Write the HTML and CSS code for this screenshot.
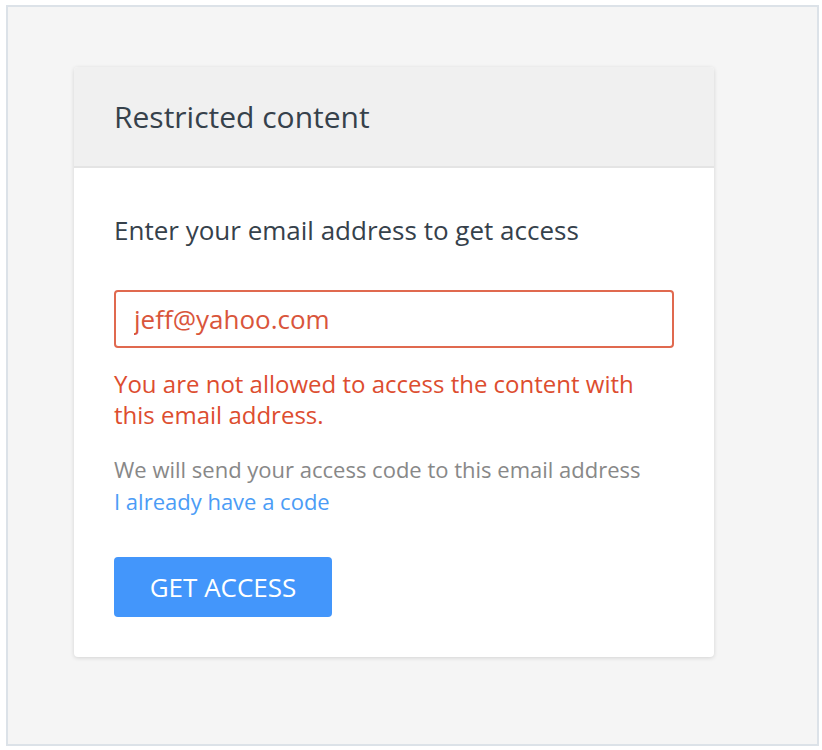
FILE: index.html
```html
<!DOCTYPE html>
<html lang="en">
  <head>
    <meta charset="UTF-8" />
    <meta name="viewport" content="width=device-width, initial-scale=1.0" />
    <title>Restricted content</title>
    <link rel="stylesheet" href="styles.css">
  </head>
  <body>
    <div class="frame">
      <div class="card">
        <header class="card-header">
          <h1>Restricted content</h1>
        </header>

        <form class="card-body" id="accessForm">
          <label for="email">Enter your email address to get access</label>
          <input type="email" id="email" name="email" class="has-error" value="jeff@yahoo.com" />
          <p class="error">You are not allowed to access the content with this email address.</p>
          <p class="hint">We will send your access code to this email address</p>
          <a class="code-link" href="#">I already have a code</a>
          <div class="actions">
            <button type="submit">GET ACCESS</button>
          </div>
        </form>
      </div>
    </div>
  </body>
</html>
```

FILE: styles.css
```css
body {
  font-family: "Open Sans", "Noto Sans", sans-serif;
  margin: 0;
  padding: 0;
}
.frame {
  margin: 5px 3px 4px 6px;
  height: 741px;
  box-sizing: border-box;
  border: 2px solid #dce2e8;
  background-color: #f5f5f5;
  padding: 60px 0 0 66px;
}
.card {
  width: 640px;
  background-color: #fff;
  border-radius: 4px;
  box-shadow: 0 1px 4px rgba(0, 0, 0, 0.14);
  overflow: hidden;
}
.card-header {
  background-color: #f0f0f0;
  border-bottom: 2px solid #e4e4e4;
  padding: 0 40px;
  height: 99px;
  display: flex;
  align-items: center;
}
.card-header h1 {
  margin: 0;
  font-size: 30px;
  font-weight: 400;
  color: #36414b;
}
.card-body {
  padding: 46px 40px 40px;
  display: flex;
  flex-direction: column;
  align-items: flex-start;
}
label {
  font-size: 26px;
  color: #36414b;
  line-height: 32px;
}
input {
  margin-top: 44px;
  width: 100%;
  height: 58px;
  box-sizing: border-box;
  padding: 0 18px;
  border: 2px solid #ddd;
  border-radius: 4px;
  font-family: inherit;
  font-size: 26px;
  outline: none;
}
input.has-error {
  border-color: #e0694f;
  color: #d9553b;
}
.error {
  margin: 20px 0 0;
  font-size: 24px;
  line-height: 31px;
  color: #dd4d2f;
}
.hint {
  margin: 23px 0 0;
  font-size: 22px;
  line-height: 32px;
  color: #888;
}
.code-link {
  font-size: 22px;
  line-height: 32px;
  color: #4b9cf6;
  text-decoration: none;
}
.actions {
  margin-top: 40px;
}
button {
  background-color: #4396fb;
  color: white;
  height: 60px;
  width: 218px;
  padding: 0;
  border: none;
  border-radius: 4px;
  font-family: inherit;
  font-size: 26px;
  cursor: pointer;
}
```
